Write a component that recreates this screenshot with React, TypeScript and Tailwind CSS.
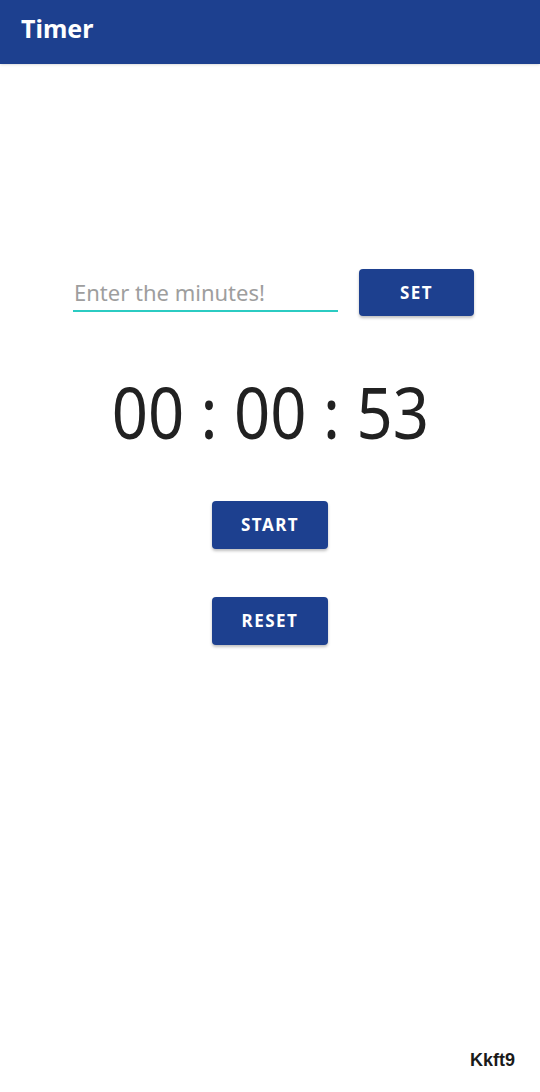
export default function App() {
  return (
    <div
      className="relative flex h-[1092px] w-[540px] flex-col bg-white"
      style={{ fontFamily: '"Noto Sans", "Open Sans", sans-serif' }}
    >
      {/* Header */}
      <div className="flex h-[64px] items-center bg-[#1d408f] px-[21px] pb-[7px] shadow-sm">
        <span className="text-[25px] font-bold leading-none text-white">Timer</span>
      </div>

      {/* Set row */}
      <div className="mt-[205px] flex items-start pl-[73px]">
        <div className="mt-[8px] w-[265px] border-b-2 border-[#2bcbc2] pb-[3px]">
          <span className="block pl-[1px] text-[22px] leading-[30px] text-[#9e9e9e]">
            Enter the minutes!
          </span>
        </div>
        <button className="ml-[21px] h-[47px] w-[115px] rounded-[4px] bg-[#1d408f] text-[17px] font-bold tracking-[1.5px] text-white shadow-[0_2px_3px_rgba(0,0,0,0.25)]">
          SET
        </button>
      </div>

      {/* Time display */}
      <div className="mt-[47px] flex justify-center">
        <span className="scale-x-[0.88] text-[72px] leading-[96px] text-[#212121]">00 : 00 : 53</span>
      </div>

      {/* Buttons */}
      <div className="mt-[42px] flex flex-col items-center gap-[48px]">
        <button className="h-[48px] w-[116px] rounded-[4px] bg-[#1d408f] text-[17px] font-bold tracking-[1.5px] text-white shadow-[0_2px_3px_rgba(0,0,0,0.25)]">
          START
        </button>
        <button className="h-[48px] w-[116px] rounded-[4px] bg-[#1d408f] text-[17px] font-bold tracking-[1.5px] text-white shadow-[0_2px_3px_rgba(0,0,0,0.25)]">
          RESET
        </button>
      </div>

      <div
        className="absolute bottom-[23px] right-[25px] text-[18px] font-bold leading-none text-[#1a1a1a]"
        style={{ fontFamily: '"Liberation Sans", Arial, sans-serif' }}
      >
        Kkft9
      </div>
    </div>
  );
}
